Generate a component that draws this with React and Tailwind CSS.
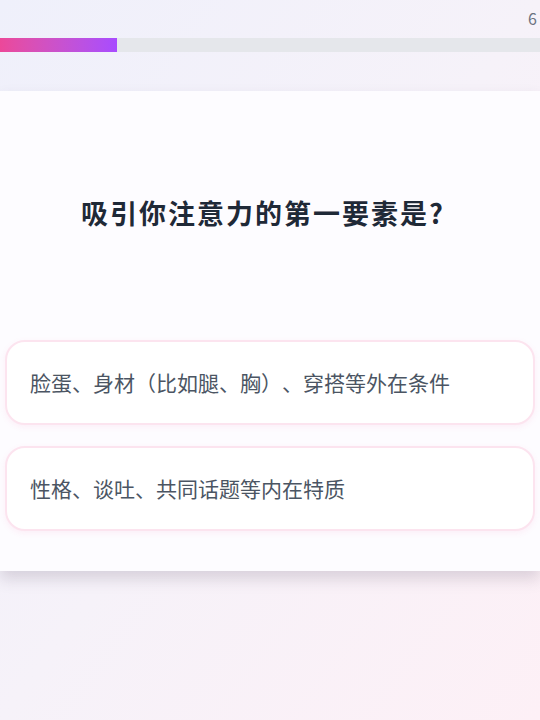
export default function App() {
    const options = [
        "脸蛋、身材（比如腿、胸）、穿搭等外在条件",
        "性格、谈吐、共同话题等内在特质",
    ];

    return (
        <div
            className="w-[540px] h-[720px] overflow-hidden bg-gradient-to-br from-[#eff0fb] via-[#f6f2f9] to-[#fdf0f6] [text-spacing-trim:space-all]"
            style={{fontFamily: '"Noto Sans CJK SC", "Noto Sans", sans-serif'}}
        >
            <div className="flex justify-end h-[38px] pt-[5px] pr-[3px]">
                <span className="text-[16px] leading-[26px] text-[#6b7280]">6</span>
            </div>
            <div className="h-[14px] bg-[#e5e7eb]">
                <div className="h-full w-[117px] bg-gradient-to-r from-[#ec4899] to-[#a84bff]"></div>
            </div>
            <div className="h-[39px]"></div>
            <div className="h-[480px] bg-[#fdfcff] shadow-[0_8px_14px_rgba(80,60,90,0.18)] flex flex-col">
                <h1 className="mt-[102px] pr-[14px] text-center text-[27px] leading-[40px] tracking-[2px] font-bold text-[#1f2937]">
                    吸引你注意力的第一要素是?
                </h1>
                <div className="mt-[107px] flex flex-col gap-[21px] px-[5px]">
                    {options.map((text) =>
                        <div
                            key={text}
                            className="h-[85px] flex items-center rounded-[20px] border-2 border-[#fce4ef] bg-white pl-[23px] shadow-[0_2px_6px_rgba(236,72,153,0.08)]"
                        >
                            <span className="text-[21px] text-[#4b5563]">{text}</span>
                        </div>
                    )}
                </div>
            </div>
        </div>
    );
}
